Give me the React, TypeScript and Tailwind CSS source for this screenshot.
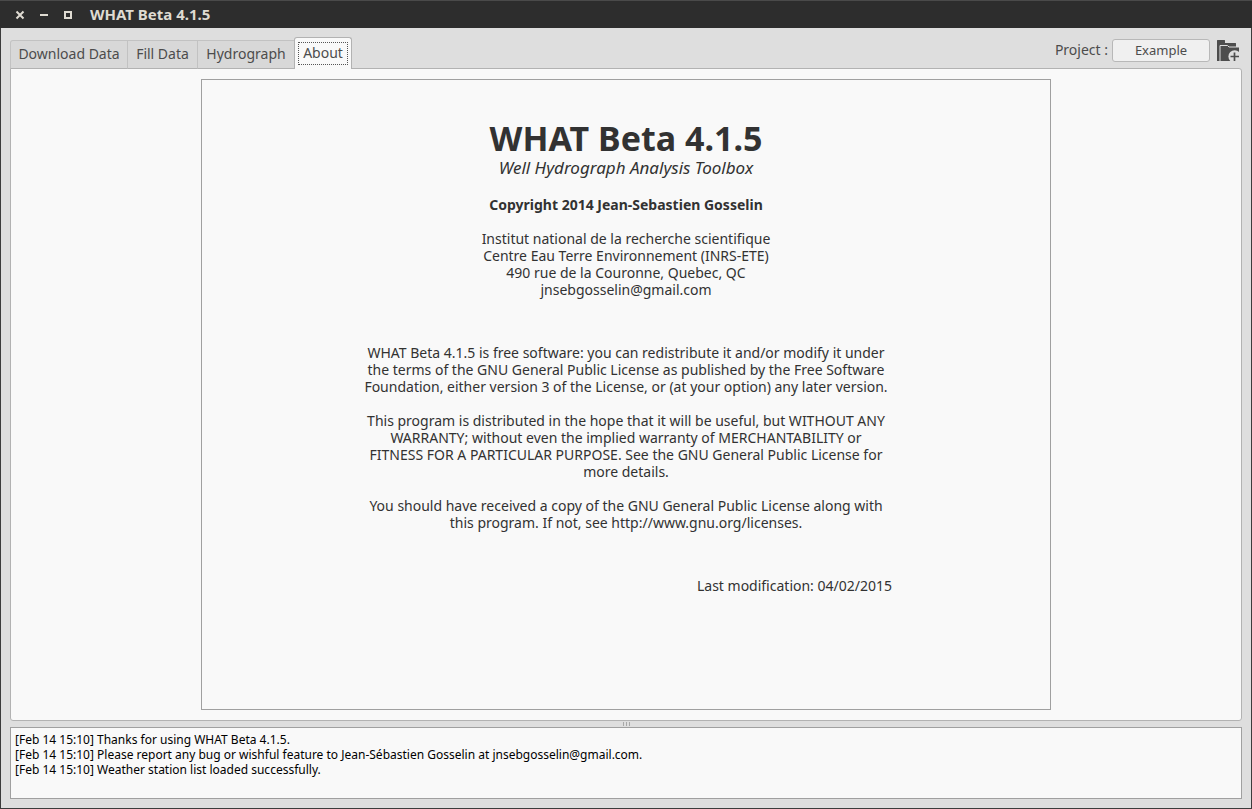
import React from "react";

const tabs = [
  { label: "Download Data", width: "w-[118px]" },
  { label: "Fill Data", width: "w-[71px]" },
  { label: "Hydrograph", width: "w-[98px]" },
];

const log = [
  "[Feb 14 15:10] Thanks for using WHAT Beta 4.1.5.",
  "[Feb 14 15:10] Please report any bug or wishful feature to Jean-Sébastien Gosselin at jnsebgosselin@gmail.com.",
  "[Feb 14 15:10] Weather station list loaded successfully.",
];

function Lines({ lines }: { lines: string[] }) {
  return (
    <>
      {lines.map((line) => (
        <span key={line} className="block whitespace-nowrap">
          {line}
        </span>
      ))}
    </>
  );
}

function TitleBar() {
  return (
    <header className="flex h-7 shrink-0 items-center border-t border-[#4a4a4a] bg-[#2d2d2d] pl-2 text-[#dfdbd2]">
      <button type="button" aria-label="Close" className="flex size-6 items-center justify-center">
        <svg width="10" height="10" viewBox="0 0 10 10" stroke="currentColor" strokeWidth="2">
          <path d="M1.500 1.500 8.500 8.500M8.500 1.500 1.500 8.500" />
        </svg>
      </button>
      <button type="button" aria-label="Minimize" className="flex size-6 items-center justify-center">
        <svg width="8" height="8" viewBox="0 0 8 8" fill="currentColor">
          <path d="M0 3h8v2H0z" />
        </svg>
      </button>
      <button type="button" aria-label="Maximize" className="flex size-6 items-center justify-center">
        <svg width="8" height="8" viewBox="0 0 8 8" fill="none" stroke="currentColor" strokeWidth="2">
          <path d="M1 1h6v6H1z" />
        </svg>
      </button>
      <span className="pl-2.5 text-[15px] font-bold whitespace-nowrap">WHAT Beta 4.1.5</span>
    </header>
  );
}

function FolderIcon() {
  return (
    <svg width="24" height="24" viewBox="0 0 24 24">
      <path d="M1 2.500Q1 2 1.500 2H8.500Q9 2 9 2.500V5H19.500Q20 5 20 5.500V9H23V23H1Z" fill="#4d4d4d" />
      <path d="M4 23V7.500H11.500L13 9H23" stroke="#dedede" strokeWidth="1" fill="none" />
      <circle cx="18.700" cy="18.500" r="6.300" fill="#dedede" />
      <path d="M18.500 14.500V23M14.500 18.500H23" stroke="#4d4d4d" strokeWidth="1.700" fill="none" />
    </svg>
  );
}

export default function App() {
  return (
    <div className="flex h-screen flex-col bg-[#dedede] font-['Noto_Sans',sans-serif] text-[#4c4c4c]">
      <TitleBar />
      <div className="flex min-h-0 flex-1 flex-col border-x border-b border-[#3c3c3c] px-[9px] pt-[9px] pb-[9px]">
        <div className="flex shrink-0 items-end justify-between">
          <div role="tablist" className="z-10 -mb-px flex items-end text-sm">
            {tabs.map((tab) => (
              <button
                key={tab.label}
                type="button"
                role="tab"
                aria-selected={false}
                className={`${tab.width} -mr-px h-[29px] border border-[#c2c2c2] border-b-[#b2b2b2] bg-[#d8d8d8] pb-0.5 whitespace-nowrap first:rounded-tl-[3px]`}
              >
                {tab.label}
              </button>
            ))}
            <button
              type="button"
              role="tab"
              aria-selected={true}
              className="h-8 w-[58px] rounded-t-[3px] border border-b-0 border-[#b2b2b2] bg-[#f9f9f9] p-[3px]"
            >
              <span className="flex h-[23px] items-center justify-center border border-dotted border-[#555555] pb-0.5">About</span>
            </button>
          </div>
          <div className="mr-0.5 mb-1.5 flex items-center text-sm">
            <span id="project-label" className="mr-1">Project :</span>
            <button
              type="button"
              aria-labelledby="project-label project-name"
              className="mr-1.5 h-[23px] w-[98px] rounded-[3px] border border-[#b8b8b8] bg-[#f0f0f0] text-[13px] leading-5"
            >
              <span id="project-name">Example</span>
            </button>
            <button type="button" aria-label="Open project">
              <FolderIcon />
            </button>
          </div>
        </div>

        <main className="flex min-h-0 flex-1 justify-center rounded-[3px] rounded-tl-none border border-[#b2b2b2] bg-[#f9f9f9] py-2.5">
          <article className="flex w-full max-w-[850px] justify-center overflow-hidden border border-[#a0a0a0] pt-10 text-center text-sm leading-[17px] text-[#323232]">
            <div className="w-[532px]">
              <h1 className="text-[34px] leading-9 font-bold">WHAT Beta 4.1.5</h1>
              <p className="mt-0.5 text-[17px] leading-5 italic">Well Hydrograph Analysis Toolbox</p>
              <p className="mt-[18px] font-bold">Copyright 2014 Jean-Sebastien Gosselin</p>
              <p className="mt-[17px]">
                <Lines
                  lines={[
                    "Institut national de la recherche scientifique",
                    "Centre Eau Terre Environnement (INRS-ETE)",
                    "490 rue de la Couronne, Quebec, QC",
                    "jnsebgosselin@gmail.com",
                  ]}
                />
              </p>
              <p className="mt-[46px]">
                <Lines
                  lines={[
                    "WHAT Beta 4.1.5 is free software: you can redistribute it and/or modify it under",
                    "the terms of the GNU General Public License as published by the Free Software",
                    "Foundation, either version 3 of the License, or (at your option) any later version.",
                  ]}
                />
              </p>
              <p className="mt-[17px]">
                <Lines
                  lines={[
                    "This program is distributed in the hope that it will be useful, but WITHOUT ANY",
                    "WARRANTY; without even the implied warranty of MERCHANTABILITY or",
                    "FITNESS FOR A PARTICULAR PURPOSE. See the GNU General Public License for",
                    "more details.",
                  ]}
                />
              </p>
              <p className="mt-[17px]">
                <Lines
                  lines={[
                    "You should have received a copy of the GNU General Public License along with",
                    "this program. If not, see http://www.gnu.org/licenses.",
                  ]}
                />
              </p>
              <p className="mt-[46px] text-right">Last modification: 04/02/2015</p>
            </div>
          </article>
        </main>

        <div className="flex h-1.5 shrink-0 items-center justify-center gap-0.5">
          <i className="h-1 w-px bg-[#a8a8a8]" />
          <i className="h-1 w-px bg-[#a8a8a8]" />
          <i className="h-1 w-px bg-[#a8a8a8]" />
        </div>

        <section
          aria-label="Messages"
          className="h-18 shrink-0 overflow-hidden border border-[#a0a0a0] bg-[#f9f9f9] px-1 pt-1 text-xs leading-[15px] text-black"
        >
          <Lines lines={log} />
        </section>
      </div>
    </div>
  );
}
